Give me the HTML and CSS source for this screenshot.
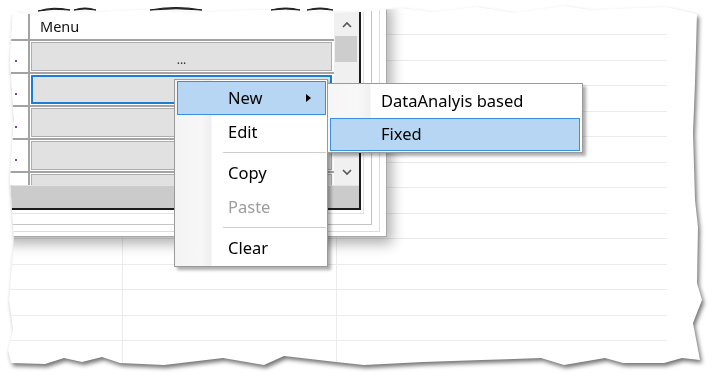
FILE: index.html
```html
<!DOCTYPE html>
<html>
<head>
<meta charset="utf-8">
<link rel="stylesheet" href="styles.css">
</head>
<body>
<div class="stage">
  <div class="paper-wrap">
    <div class="paper">
      <div class="sheet"></div>

      <div class="win">
        <div class="f1"><div class="f2"><div class="f3"><div class="f4">
          <div class="grid">
            <div class="grid-main">
              <div class="table">
                <div class="hdr">
                  <div class="rh"></div>
                  <div class="hcell">Menu</div>
                </div>
                <div class="row"><div class="rh"><span class="dot"></span></div><div class="cell"><div class="btn">...</div></div></div>
                <div class="row"><div class="rh"><span class="dot"></span></div><div class="cell"><div class="btn focus"></div></div></div>
                <div class="row"><div class="rh"><span class="dot"></span></div><div class="cell"><div class="btn"></div></div></div>
                <div class="row"><div class="rh"><span class="dot"></span></div><div class="cell"><div class="btn"></div></div></div>
                <div class="row"><div class="rh"></div><div class="cell"><div class="btn"></div></div></div>
              </div>
              <div class="vscroll">
                <div class="sb-up"><svg width="10" height="7" viewBox="0 0 10 7"><polyline points="1,6 5,2 9,6" fill="none" stroke="#555" stroke-width="1.6"/></svg></div>
                <div class="thumb"></div>
                <div class="track"></div>
                <div class="sb-down"><svg width="10" height="7" viewBox="0 0 10 7"><polyline points="1,1 5,5 9,1" fill="none" stroke="#555" stroke-width="1.6"/></svg></div>
              </div>
            </div>
            <div class="hbar"></div>
          </div>
        </div></div></div></div>
      </div>

      <div class="menu ctx">
        <div class="item hot">New<span class="tri"></span></div>
        <div class="item">Edit</div>
        <div class="sep"></div>
        <div class="item">Copy</div>
        <div class="item off">Paste</div>
        <div class="sep"></div>
        <div class="item">Clear</div>
      </div>

      <div class="menu sub">
        <div class="item">DataAnalyis based</div>
        <div class="item hot">Fixed</div>
      </div>
    </div>
  </div>
  <svg class="arcs" width="712" height="20" viewBox="0 0 712 20">
    <path d="M38 11 Q54 6 70 10 Q54 8 38 11 Z" fill="#1e1e1e" stroke="#1e1e1e" stroke-width="1"/>
    <path d="M74 10 Q85 6 96 10 Q85 8 74 10 Z" fill="#1e1e1e" stroke="#1e1e1e" stroke-width="1"/>
    <path d="M150 10 Q176 5 202 10 Q176 7.5 150 10 Z" fill="#1e1e1e" stroke="#1e1e1e" stroke-width="1"/>
    <path d="M271 10 Q286 6 300 10 Q286 8 271 10 Z" fill="#1e1e1e" stroke="#1e1e1e" stroke-width="1"/>
    <path d="M307 10 Q320 6 333 10 Q320 8 307 10 Z" fill="#1e1e1e" stroke="#1e1e1e" stroke-width="1"/>
  </svg>
</div>
</body>
</html>
```

FILE: styles.css
```css
html, body {
  margin: 0;
  padding: 0;
  background: #ffffff;
}

.stage {
  position: relative;
  width: 712px;
  height: 376px;
  overflow: hidden;
  background: #ffffff;
}

.paper-wrap {
  position: absolute;
  inset: 0;
  filter: drop-shadow(2px 3px 2px rgba(0, 0, 0, 0.55));
}

.paper {
  position: absolute;
  inset: 0;
  background: #ffffff;
  clip-path: polygon(
    13px 12px, 36px 15px, 64px 10px, 91px 13px, 120px 11px, 145px 10px, 191px 13px,
    230px 11px, 273px 10px, 318px 13px, 364px 12px, 400px 8px, 432px 12px, 477px 7px,
    514px 13px, 564px 6px, 591px 10px, 636px 8px, 666px 7px, 697px 14px,
    695px 83px, 693px 133px, 695px 200px, 698px 227px, 697px 283px, 702px 300px,
    693px 323px, 700px 360px,
    682px 358px, 664px 363px, 623px 363px, 605px 358px, 564px 365px, 541px 358px,
    482px 360px, 423px 362px, 364px 365px, 336px 362px, 284px 356px, 264px 365px,
    223px 358px, 164px 365px, 120px 363px, 102px 357px, 82px 362px, 64px 358px,
    45px 364px, 11px 363px,
    8px 350px, 13px 330px, 9px 300px, 14px 240px, 10px 180px, 14px 120px, 10px 60px
  );
}

.sheet {
  position: absolute;
  left: 0;
  top: 0;
  width: 667px;
  height: 376px;
  background:
    linear-gradient(90deg, transparent 0 122px, #ebebeb 122px 123px, transparent 123px 336px, #ebebeb 336px 337px, transparent 337px),
    repeating-linear-gradient(180deg, transparent 0 24.5px, #ebebeb 24.5px 25.5px);
  background-position: 0 0, 0 10px;
}

.arcs {
  position: absolute;
  left: 0;
  top: 0;
}

/* ---------- window ---------- */
.win {
  position: absolute;
  left: 0;
  top: 0;
  font-family: "Noto Sans", sans-serif;
  box-shadow: 5px 7px 12px rgba(0, 0, 0, 0.3);
}

.f1 {
  background: #ffffff;
  border-right: 1px solid #a9a9a9;
  border-bottom: 1px solid #a9a9a9;
  padding: 0 6px 4px 0;
}
.f2 {
  border-right: 1px solid #dcdcdc;
  border-bottom: 1px solid #dcdcdc;
  padding: 0 7px 6px 0;
}
.f3 {
  border-right: 1px solid #c4c4c4;
  border-bottom: 1px solid #c4c4c4;
  padding: 0 7px 10px 0;
}
.f4 {
  border-right: 1px solid #e2e2e2;
  border-bottom: 1px solid #e2e2e2;
  padding: 0 2px 3px 0;
}

.grid {
  width: 359px;
  border-right: 2px solid #1c1c1c;
  border-bottom: 2px solid #1c1c1c;
  display: flex;
  flex-direction: column;
  background: #ffffff;
}

.grid-main {
  height: 185px;
  display: flex;
  overflow: hidden;
}

.table {
  width: 334px;
  display: flex;
  flex-direction: column;
  overflow: hidden;
}

.hdr {
  height: 39px;
  flex: none;
  display: flex;
  border-bottom: 2px solid #a3a3a3;
}

.rh {
  width: 28px;
  flex: none;
  border-right: 2px solid #a3a3a3;
}

.hcell {
  padding: 16px 0 0 10px;
  font-size: 14.5px;
  line-height: 20px;
  color: #111;
}

.row {
  height: 31px;
  flex: none;
  display: flex;
  border-bottom: 2px solid #a3a3a3;
}

.dot {
  display: block;
  width: 2px;
  height: 2px;
  margin: 19px 0 0 15px;
  background: #7a4a8e;
}

.cell {
  flex: 1;
  padding: 1px 2px 1px 1px;
  display: flex;
}

.btn {
  flex: 1;
  box-sizing: border-box;
  background: #e1e1e1;
  border: 1px solid #adadad;
  font-size: 12px;
  line-height: 14px;
  color: #333;
  text-align: center;
  padding-top: 10px;
}

.btn.focus {
  border: 2px solid #1a7fd4;
}

.vscroll {
  width: 25px;
  flex: none;
  display: flex;
  flex-direction: column;
  background: #f0f0f0;
}

.sb-up {
  height: 36px;
  display: flex;
  justify-content: center;
  align-items: flex-end;
}
.sb-up svg { margin-bottom: 8px; }

.thumb {
  height: 26px;
  margin: 0 2px 0 1px;
  background: #cdcdcd;
}

.track {
  flex: 1;
}

.sb-down {
  height: 22px;
  display: flex;
  justify-content: center;
  align-items: flex-start;
}
.sb-down svg { margin-top: 6px; }

.hbar {
  height: 23px;
  background: #cbcbcb;
  border-top: 1px solid #e4e4e4;
  box-sizing: border-box;
}

/* ---------- menus ---------- */
.menu {
  position: absolute;
  box-sizing: border-box;
  border: 1px solid #9a9a9a;
  font-family: "Noto Sans", sans-serif;
  font-size: 16.5px;
  color: #000;
  box-shadow: 3px 3px 3px rgba(0, 0, 0, 0.32);
}

.ctx {
  left: 174px;
  top: 79px;
  width: 154px;
  padding: 1px 1px 1px 2px;
  background: linear-gradient(90deg, #f4f4f4 0, #f7f7f7 26px, #efefef 36px, #ffffff 37px);
}

.sub {
  left: 327px;
  top: 83px;
  width: 256px;
  padding: 1px 2px 1px 2px;
  background: linear-gradient(90deg, #f6f6f6 0, #f8f8f8 30px, #f0f0f0 42px, #ffffff 43px);
}

.item {
  position: relative;
  height: 34px;
  box-sizing: border-box;
  border: 1px solid transparent;
  padding-left: 50px;
  line-height: 31px;
  white-space: nowrap;
}

.sub .item {
  height: 33px;
  line-height: 30px;
}

.item.hot {
  background: #b7d6f3;
  border-color: #3b8fe0;
}

.item.off {
  color: #9d9d9d;
}

.tri {
  position: absolute;
  right: 14px;
  top: 12px;
  width: 0;
  height: 0;
  border-top: 4.5px solid transparent;
  border-bottom: 4.5px solid transparent;
  border-left: 5px solid #000;
}

.sep {
  height: 7px;
  margin-left: 46px;
  position: relative;
}
.sep::after {
  content: "";
  position: absolute;
  left: 0;
  right: 0;
  top: 3px;
  height: 1px;
  background: #cdcdcd;
}
```
